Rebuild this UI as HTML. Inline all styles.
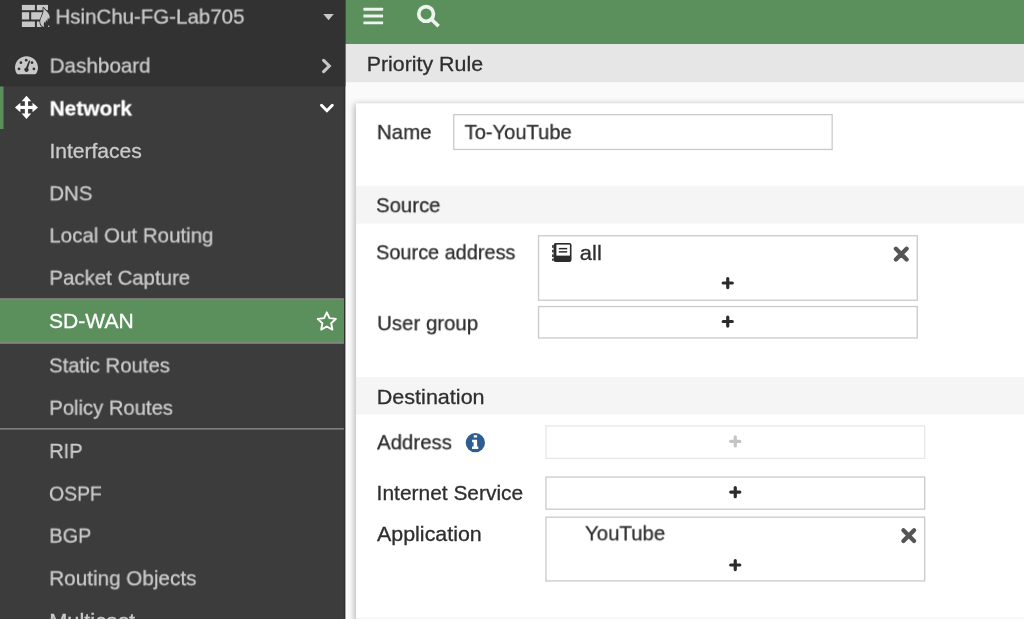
<!DOCTYPE html>
<html lang="en">
<head>
<meta charset="utf-8">
<title>Priority Rule</title>
<style>
html,body{margin:0;padding:0}
body{width:1024px;height:619px;overflow:hidden;position:relative;background:#fafafa;font-family:"Liberation Sans",sans-serif}
#g{position:absolute;left:0;top:0;width:1024px;height:619px;display:block}
.t{will-change:transform;-webkit-text-stroke:0.3px currentColor;position:absolute;white-space:nowrap;font-size:20.9px;line-height:20.9px;transform-origin:0 0;display:block}
</style>
</head>
<body>
<svg id="g" width="1024" height="619" viewBox="0 0 1024 619">
<defs>
<filter id="sh" x="-5%" y="-5%" width="110%" height="110%"><feGaussianBlur stdDeviation="3"/></filter>
</defs>
<!-- content background -->
<rect x="345" y="0" width="679" height="619" fill="#fafafa"/>
<!-- top bar -->
<rect x="345" y="0" width="679" height="44.1" fill="#5b905d"/>
<!-- title bar -->
<rect x="345" y="44.1" width="679" height="38.1" fill="#e6e6e6"/>
<!-- card shadow + card -->
<rect x="354.5" y="104" width="700" height="560" fill="#000" opacity="0.27" filter="url(#sh)"/>
<rect x="356" y="103.3" width="700" height="560" fill="#ffffff"/>
<rect x="356" y="617.6" width="668" height="10" fill="#f5f5f5"/>
<!-- section headers -->
<rect x="356" y="185.8" width="668" height="37.9" fill="#f5f5f5"/>
<rect x="356" y="377" width="668" height="37.6" fill="#f5f5f5"/>
<!-- inputs -->
<g fill="#fff" stroke="#cacaca" stroke-width="1.3">
<rect x="453.75" y="114.65" width="378.40" height="34.80"/>
<rect x="538.55" y="235.75" width="378.70" height="64.50"/>
<rect x="538.55" y="306.55" width="378.70" height="31.40"/>
<rect x="545.95" y="477.05" width="378.70" height="32.10"/>
<rect x="545.95" y="517.15" width="378.70" height="63.80"/>
</g>
<rect x="545.95" y="425.95" width="378.70" height="32.50" fill="#fff" stroke="#e7e7e7" stroke-width="1.3"/>
<!-- plus icons -->
<g stroke="#2b2b2b" stroke-width="3.2" stroke-linecap="round" fill="none">
<path d="M723.2 283H732.3M727.75 278.5V287.6"/>
<path d="M723.2 321.5H732.3M727.75 317V326.1"/>
<path d="M730.7 492.1H739.8M735.25 487.6V496.7"/>
<path d="M730.7 565H739.8M735.25 560.5V569.6"/>
</g>
<path d="M730.7 441.4H739.8M735.25 436.9V446" stroke="#c4c4c4" stroke-width="3.2" stroke-linecap="round" fill="none"/>
<!-- x icons -->
<g stroke="#555" stroke-width="4.3" stroke-linecap="round" fill="none">
<path d="M895.9 248.7L906.6 259.4M906.6 248.7L895.9 259.4"/>
<path d="M903.4 530.3L914.1 541M914.1 530.3L903.4 541"/>
</g>
<!-- info icon -->
<circle cx="475.35" cy="442.7" r="9.65" fill="#2c5f8f"/>
<path d="M473.8 435.3h3.3v2.3h-3.3zM472.1 439.7h5v6.8h1.2v2.5h-6.3v-2.5h1.6v-4.3h-1.5z" fill="#fff"/>
<!-- address icon -->
<g>
<rect x="553.6" y="243" width="17.9" height="19" rx="2.2" fill="#2b2b2b"/>
<rect x="556.4" y="244.6" width="13.5" height="11" fill="#fff"/>
<rect x="558.8" y="247.9" width="8.4" height="1.5" fill="#2b2b2b"/>
<rect x="558.8" y="251.1" width="8.4" height="1.5" fill="#2b2b2b"/>
<rect x="552.1" y="245.2" width="1.6" height="2.6" fill="#2b2b2b"/>
<rect x="552.1" y="249.8" width="1.6" height="2.6" fill="#2b2b2b"/>
<rect x="552.1" y="254.4" width="1.6" height="2.6" fill="#2b2b2b"/>
<rect x="552.1" y="258.6" width="1.6" height="2.2" fill="#2b2b2b"/>
</g>
<!-- hamburger -->
<g fill="#eef4ee">
<rect x="363.4" y="7.8" width="19.7" height="2.9" rx="0.4"/>
<rect x="363.4" y="14.5" width="19.7" height="2.9" rx="0.4"/>
<rect x="363.4" y="21.4" width="19.7" height="2.9" rx="0.4"/>
</g>
<!-- search -->
<g stroke="#eef4ee" fill="none">
<circle cx="426.1" cy="13.9" r="7.35" stroke-width="3.7"/>
<path d="M431.4 19.2L438.6 26.3" stroke-width="3.7" stroke-linecap="butt"/>
</g>

<!-- sidebar -->
<rect x="0" y="0" width="345.4" height="619" fill="#303030"/>
<rect x="0" y="0" width="343.8" height="619" fill="#3c3c3c"/>
<rect x="0" y="0" width="345.4" height="86.5" fill="#323232"/>
<!-- network active bar -->
<rect x="0" y="86.5" width="3.5" height="42.5" fill="#5b905d"/>
<!-- SD-WAN row -->
<rect x="0" y="298.2" width="343.9" height="45.6" fill="#858585"/>
<rect x="0" y="299.7" width="343.9" height="42.4" fill="#5b905d"/>
<!-- separator -->
<rect x="0" y="428.1" width="343.9" height="1.5" fill="#858585"/>
<!-- firewall icon -->
<g fill="#c8c8c8">
<rect x="21.9" y="4.9" width="13" height="5.3"/>
<rect x="36.9" y="4.9" width="11.1" height="5.3"/>
<rect x="21.9" y="12.2" width="7.3" height="7.3"/>
<rect x="31.2" y="12.2" width="12.5" height="7.3"/>
<rect x="21.9" y="21.5" width="13" height="5.5"/>
<rect x="36.9" y="21.5" width="5" height="5.5"/>
<path d="M43.3 7.7C44.8 10.3 49.7 12.8 49.7 17.3L49 19.5L47.9 17.6L47.2 21.7L46.1 19.6L45.3 23.2L44.5 21.6C43.8 23.2 43.6 25 44.1 27C41.6 26.6 40.2 24.2 40.2 21.6C40.2 17 44.6 14 43.3 7.7Z" stroke="#323232" stroke-width="1.5" paint-order="stroke" stroke-linejoin="round"/>
<rect x="48" y="25.6" width="1.3" height="1.3"/>
</g>
<!-- caret -->
<path d="M323.3 14.1H333.8L328.55 20.2Z" fill="#c8c8c8"/>
<!-- dashboard icon -->
<g>
<path d="M18 74.2C17.5 74.2 17.1 74 16.8 73.5C15.7 71.8 15 69.8 15 67.7C15 61.3 20.1 56.2 26.5 56.2C32.9 56.2 38 61.3 38 67.7C38 69.8 37.3 71.8 36.2 73.5C35.9 74 35.5 74.2 35 74.2Z" fill="#c8c8c8"/>
<g fill="#323232">
<circle cx="19" cy="68.9" r="1.35"/><circle cx="20.9" cy="62.7" r="1.35"/><circle cx="26.2" cy="60.2" r="1.35"/><circle cx="32" cy="62.7" r="1.35"/><circle cx="33.9" cy="68.9" r="1.35"/>
<path d="M29 60.4L30.3 60.8L28 68.3A2.1 2.1 0 1 1 25.9 67.7Z"/>
</g>
</g>
<!-- chevron right -->
<path d="M323.6 60.3L329.3 66L323.6 71.7" stroke="#c8c8c8" stroke-width="3.1" fill="none" stroke-linecap="round" stroke-linejoin="miter"/>
<!-- arrows icon -->
<g fill="#fff">
<path d="M26.45 95.8L31.25 101.3H21.65Z"/>
<path d="M26.45 119.1L31.25 113.6H21.65Z"/>
<path d="M14.9 107.45L20.4 102.65V112.25Z"/>
<path d="M38 107.45L32.5 102.65V112.25Z"/>
<rect x="24.85" y="100" width="3.2" height="15"/>
<rect x="19" y="105.85" width="15" height="3.2"/>
</g>
<!-- chevron down -->
<path d="M321.5 105.3L326.9 110.7L332.3 105.3" stroke="#fff" stroke-width="3" fill="none" stroke-linecap="round"/>
<!-- star -->
<path d="M326.80 312.30 L329.50 318.10 L335.90 318.90 L331.20 323.30 L332.40 329.60 L326.80 326.50 L321.20 329.60 L322.40 323.30 L317.70 318.90 L324.10 318.10 Z" stroke="#fff" stroke-width="1.9" fill="none" stroke-linejoin="round"/>
</svg>
<span class="t" style="left:55px;top:6px;transform:translate(0.48px,0.60px) scaleX(0.9800);color:#cbcbcb;font-weight:400">HsinChu-FG-Lab705</span>
<span class="t" style="left:49px;top:55px;transform:translate(0.67px,0.60px) scaleX(0.9879);color:#cbcbcb;font-weight:400">Dashboard</span>
<span class="t" style="left:49px;top:98px;transform:translate(0.60px,0.40px) scaleX(0.9985);color:#ffffff;font-weight:700">Network</span>
<span class="t" style="left:49px;top:140px;transform:translate(0.38px,0.90px) scaleX(1.0079);color:#cbcbcb;font-weight:400">Interfaces</span>
<span class="t" style="left:49px;top:183px;transform:translate(0.40px,0.30px) scaleX(0.9735);color:#cbcbcb;font-weight:400">DNS</span>
<span class="t" style="left:49px;top:225px;transform:translate(0.38px,0.40px) scaleX(0.9814);color:#cbcbcb;font-weight:400">Local Out Routing</span>
<span class="t" style="left:49px;top:267px;transform:translate(0.39px,0.70px) scaleX(0.9777);color:#cbcbcb;font-weight:400">Packet Capture</span>
<span class="t" style="left:48px;top:311px;transform:translate(0.99px,0.00px) scaleX(1.0092);color:#ffffff;font-weight:400">SD-WAN</span>
<span class="t" style="left:49px;top:355px;transform:translate(0.03px,0.40px) scaleX(0.9731);color:#cbcbcb;font-weight:400">Static Routes</span>
<span class="t" style="left:49px;top:397px;transform:translate(0.31px,0.70px) scaleX(0.9677);color:#cbcbcb;font-weight:400">Policy Routes</span>
<span class="t" style="left:49px;top:441px;transform:translate(0.33px,0.00px) scaleX(0.9531);color:#cbcbcb;font-weight:400">RIP</span>
<span class="t" style="left:49px;top:483px;transform:translate(0.07px,0.60px) scaleX(0.9273);color:#cbcbcb;font-weight:400">OSPF</span>
<span class="t" style="left:49px;top:525px;transform:translate(0.34px,0.60px) scaleX(0.9503);color:#cbcbcb;font-weight:400">BGP</span>
<span class="t" style="left:49px;top:568px;transform:translate(0.27px,0.30px) scaleX(0.9897);color:#cbcbcb;font-weight:400">Routing Objects</span>
<span class="t" style="left:49px;top:610px;transform:translate(0.17px,0.60px) scaleX(1.0435);color:#cbcbcb;font-weight:400">Multicast</span>
<span class="t" style="left:366px;top:53px;transform:translate(0.71px,0.90px) scaleX(1.0225);color:#2e2e2e;font-weight:400">Priority Rule</span>
<span class="t" style="left:376px;top:122px;transform:translate(0.88px,0.10px) scaleX(0.9830);color:#2e2e2e;font-weight:400">Name</span>
<span class="t" style="left:464px;top:122px;transform:translate(0.62px,0.10px) scaleX(0.9631);color:#2e2e2e;font-weight:400">To-YouTube</span>
<span class="t" style="left:376px;top:195px;transform:translate(0.03px,0.20px) scaleX(0.9728);color:#2e2e2e;font-weight:400">Source</span>
<span class="t" style="left:376px;top:242px;transform:translate(0.05px,0.30px) scaleX(0.9529);color:#2e2e2e;font-weight:400">Source address</span>
<span class="t" style="left:579px;top:243px;transform:translate(0.85px,0.30px) scaleX(1.0486);color:#2e2e2e;font-weight:400">all</span>
<span class="t" style="left:377px;top:313px;transform:translate(0.13px,0.20px) scaleX(0.9772);color:#2e2e2e;font-weight:400">User group</span>
<span class="t" style="left:376px;top:386px;transform:translate(0.79px,0.50px) scaleX(1.0315);color:#2e2e2e;font-weight:400">Destination</span>
<span class="t" style="left:377px;top:432px;transform:translate(0.00px,0.30px) scaleX(0.9769);color:#2e2e2e;font-weight:400">Address</span>
<span class="t" style="left:376px;top:483px;transform:translate(0.60px,0.00px) scaleX(1.0021);color:#2e2e2e;font-weight:400">Internet Service</span>
<span class="t" style="left:377px;top:523px;transform:translate(0.00px,0.80px) scaleX(1.0253);color:#2e2e2e;font-weight:400">Application</span>
<span class="t" style="left:584px;top:523px;transform:translate(0.97px,0.30px) scaleX(0.9776);color:#2e2e2e;font-weight:400">YouTube</span>
</body>
</html>
